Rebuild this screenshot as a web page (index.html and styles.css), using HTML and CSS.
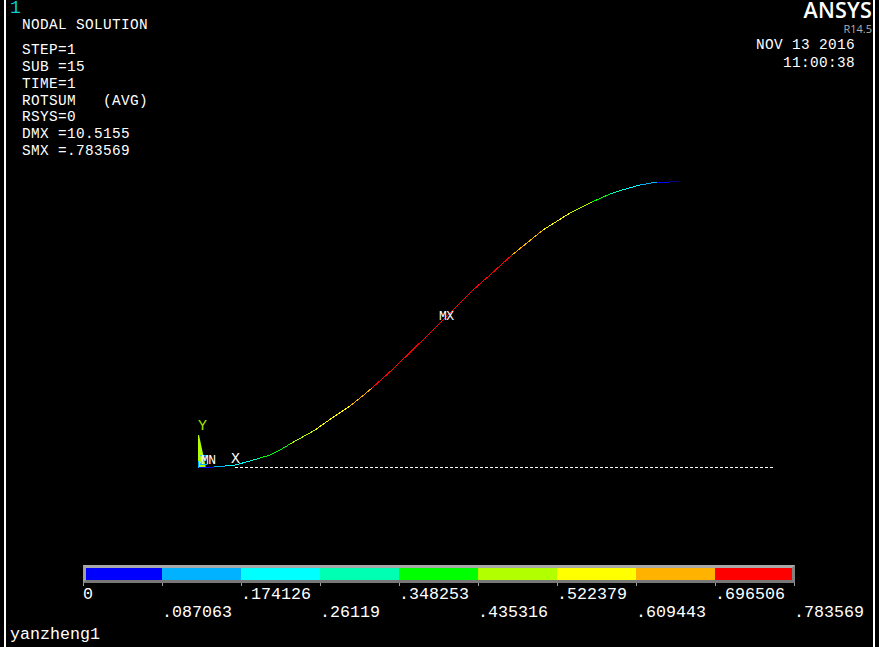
FILE: index.html
```html
<!DOCTYPE html>
<html lang="en">
<head>
<meta charset="utf-8">
<title>ANSYS nodal solution</title>
<link rel="stylesheet" href="styles.css">
</head>
<body>
<main class="screen">
  <svg class="plot" width="879" height="647" viewBox="0 0 879 647" aria-label="Deformed beam contour plot">
    <line class="baseline" x1="235" y1="467.5" x2="773" y2="467.5"/>
    <polygon class="lime-fill" points="198,435 199,435 206,468 198,468"/>
    <g class="curve">
      <polyline stroke="#00b2ff" points="198,468 198,461"/>
      <polyline stroke="#0000ff" points="199,467 214,467"/>
      <polyline stroke="#00b2ff" points="214,467 225,466"/>
      <polyline stroke="#00ffff" points="225,466 235,465 250,461"/>
      <polyline stroke="#00ffb2" points="250,461 260,458"/>
      <polyline stroke="#00ff00" points="260,458 270,455 280,450 290,444"/>
      <polyline stroke="#b2ff00" points="290,444 299,439 315,430"/>
      <polyline stroke="#ffff00" points="315,430 332,418 350,406"/>
      <polyline stroke="#ffb200" points="350,406 365,394 372,388"/>
      <polyline stroke="#ff0000" points="372,388 393,369 429,334 473,290 490,275 512,255"/>
      <polyline stroke="#ffb200" points="512,255 543,230"/>
      <polyline stroke="#ffff00" points="543,230 570,213"/>
      <polyline stroke="#b2ff00" points="570,213 592,202"/>
      <polyline stroke="#00ff00" points="592,202 610,194"/>
      <polyline stroke="#00ffb2" points="610,194 622,190"/>
      <polyline stroke="#00ffff" points="622,190 640,185"/>
      <polyline stroke="#00b2ff" points="640,185 657,182"/>
      <polyline stroke="#0000ff" points="657,182 669,182"/>
      <polyline stroke="#000080" points="669,181 680,181"/>
    </g>
    <text class="label lime" x="198" y="430">Y</text>
    <text class="label cyan" x="199" y="465">Z</text>
    <text class="label small" x="201" y="464">MN</text>
    <text class="label white" x="231" y="463">X</text>
    <text class="label small" x="439" y="320">MX</text>
  </svg>

  <div class="frame">
    <header class="top">
      <div class="left">
        <div class="window-number">1</div>
        <div class="title">NODAL SOLUTION</div>
        <ul class="info">
          <li>STEP=1</li>
          <li>SUB =15</li>
          <li>TIME=1</li>
          <li>ROTSUM   (AVG)</li>
          <li>RSYS=0</li>
          <li>DMX =10.5155</li>
          <li>SMX =.783569</li>
        </ul>
      </div>
      <div class="right">
        <div class="brand">ANSYS</div>
        <div class="version">R14.5</div>
        <div class="stamp first-stamp">NOV 13 2016</div>
        <div class="stamp">11:00:38</div>
      </div>
    </header>

    <section class="legend">
      <div class="bar">
        <span class="swatch first c1"></span>
        <span class="swatch c2"></span>
        <span class="swatch c3"></span>
        <span class="swatch c4"></span>
        <span class="swatch c5"></span>
        <span class="swatch c6"></span>
        <span class="swatch c7"></span>
        <span class="swatch c8"></span>
        <span class="swatch last c9"></span>
      </div>
      <div class="ticks">
        <i></i><i></i><i></i><i></i><i></i><i></i><i></i><i></i><i></i><i></i>
      </div>
      <div class="values upper">
        <span>0</span><span></span><span>.174126</span><span></span><span>.348253</span><span></span><span>.522379</span><span></span><span>.696506</span>
      </div>
      <div class="values lower">
        <span></span><span>.087063</span><span></span><span>.26119</span><span></span><span>.435316</span><span></span><span>.609443</span><span></span><span>.783569</span>
      </div>
    </section>

    <footer class="job">yanzheng1</footer>
  </div>
</main>
</body>
</html>
```

FILE: styles.css
```css
* { box-sizing: border-box; }

html, body {
  margin: 0;
  padding: 0;
  background: #000;
}

.screen {
  position: relative;
  width: 879px;
  height: 647px;
  background: #000;
  overflow: hidden;
  font-family: "Liberation Mono", "Courier New", monospace;
  color: #fff;
}

.plot {
  position: absolute;
  left: 0;
  top: 0;
}

.frame {
  position: relative;
  margin: 0 4px;
  width: 871px;
  height: 647px;
  border-left: 2px solid #fff;
  border-right: 2px solid #fff;
  display: flex;
  flex-direction: column;
}

.top {
  display: flex;
  justify-content: space-between;
  flex: 1;
}

.left { padding-left: 4px; }

.window-number {
  font-size: 18px;
  line-height: 17px;
  color: #00d0d0;
}

.title {
  margin: 0 0 0 12px;
  font-size: 14.4px;
  letter-spacing: 0.36px;
  line-height: 16px;
}

.info {
  list-style: none;
  margin: 9px 0 0 12px;
  padding: 0;
  font-size: 14.4px;
  letter-spacing: 0.36px;
  line-height: 16.85px;
}

.info li { white-space: pre; }

.right {
  display: flex;
  flex-direction: column;
  align-items: flex-end;
  padding-right: 1px;
}

.brand {
  font-family: "Open Sans", "Liberation Sans", sans-serif;
  font-weight: 600;
  font-size: 21.5px;
  line-height: 20px;
  letter-spacing: 0.2px;
}

.version {
  margin-top: 3px;
  font-family: "Open Sans", "Liberation Sans", sans-serif;
  font-size: 11px;
  line-height: 12px;
  color: #b0b0b0;
}

.stamp {
  width: 99px;
  margin-right: 17px;
  font-size: 14.4px;
  letter-spacing: 0.36px;
  line-height: 18px;
  text-align: right;
  white-space: pre;
}

.first-stamp { margin-top: 1px; }

.legend {
  margin-left: 77px;
  width: 790px;
}

.bar {
  width: 712px;
  height: 18px;
  display: flex;
  border-style: solid;
  border-width: 3px;
  border-color: #a8a8a8 #808080 #787878 #a0a0a0;
}

.swatch { width: 79px; }
.swatch.first { width: 76px; }
.swatch.last { width: 77px; }

.c1 { background: #0000ff; }
.c2 { background: #00b2ff; }
.c3 { background: #00ffff; }
.c4 { background: #00ffb2; }
.c5 { background: #00ff00; }
.c6 { background: #b2ff00; }
.c7 { background: #ffff00; }
.c8 { background: #ffb200; }
.c9 { background: #ff0000; }

.ticks {
  display: flex;
  height: 3px;
  width: 713px;
  gap: 78px;
}

.ticks i {
  display: block;
  width: 1px;
  height: 3px;
  background: #a0a0a0;
}

.values {
  display: grid;
  grid-template-columns: repeat(10, 79px);
  font-size: 16.67px;
  line-height: 18px;
  height: 18px;
  white-space: pre;
}

.job {
  margin-left: 4px;
  margin-top: 5px;
  margin-bottom: 4px;
  font-size: 16.67px;
  line-height: 16px;
}

.baseline {
  stroke: #fff;
  stroke-width: 1;
  stroke-dasharray: 3 2;
}

.lime-fill { fill: #b2ff00; }

.curve polyline {
  fill: none;
  stroke-width: 1;
  shape-rendering: crispEdges;
}

.label {
  font-family: "Liberation Mono", "Courier New", monospace;
}

.lime { font-size: 15px; fill: #a0e000; }
.cyan { font-size: 15px; fill: #00b2ff; }
.small { font-size: 13px; fill: #fff; letter-spacing: -0.6px; }
.white { font-size: 15px; fill: #fff; }
```
